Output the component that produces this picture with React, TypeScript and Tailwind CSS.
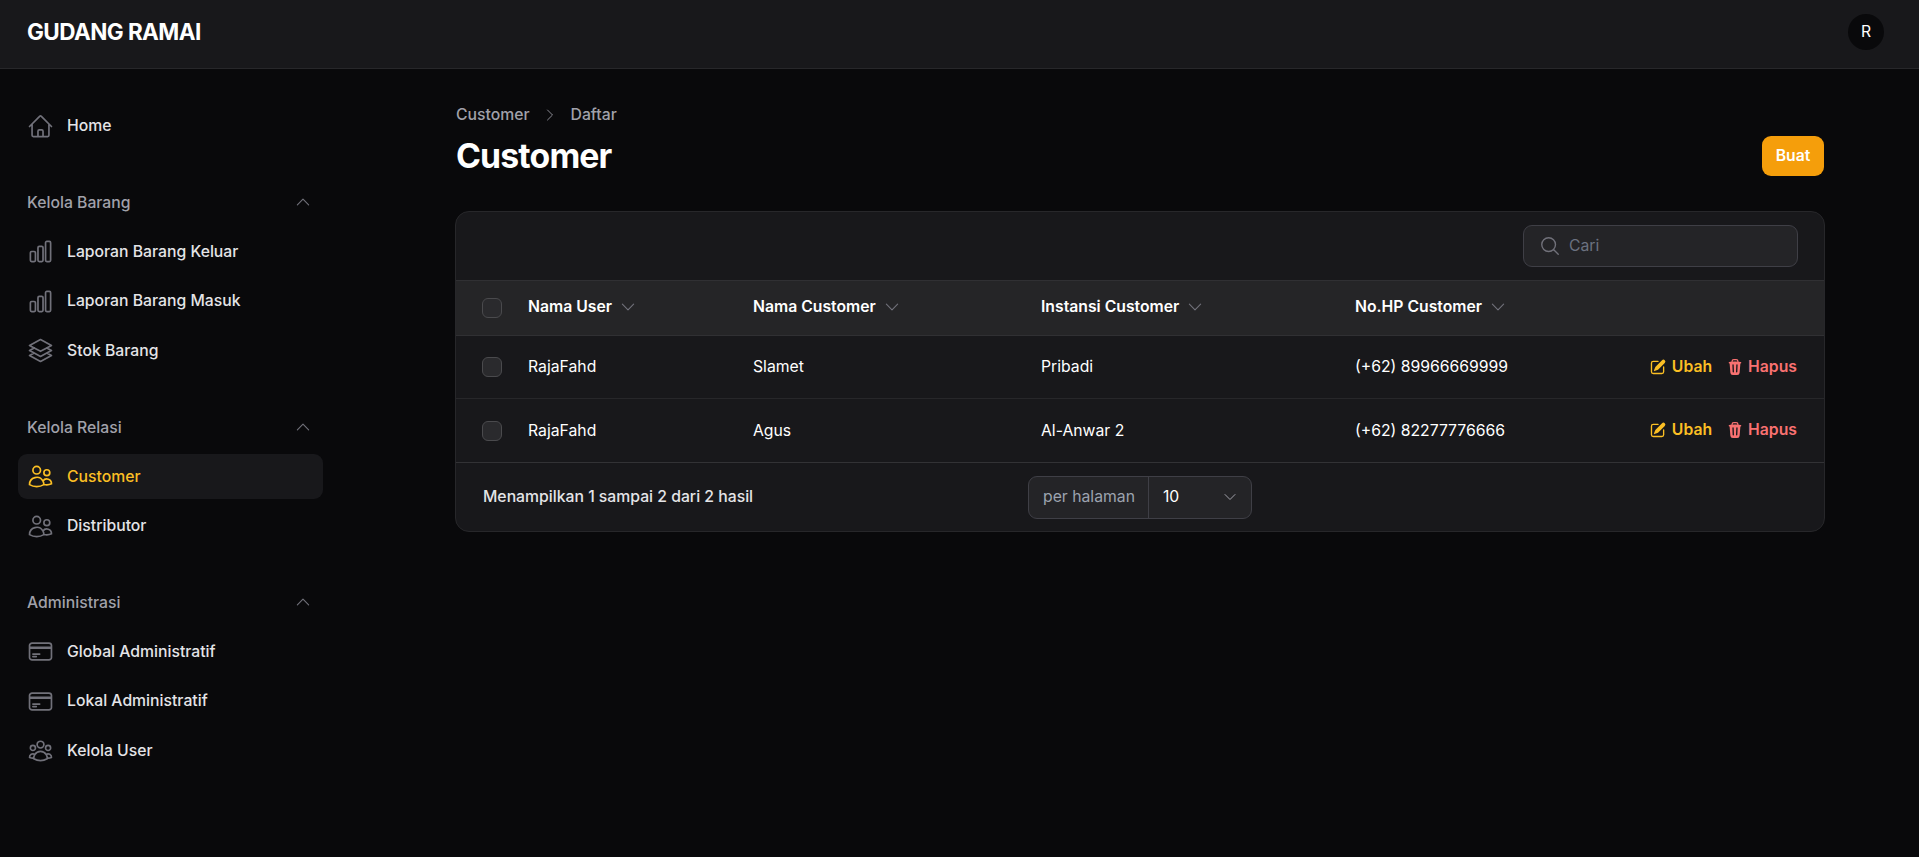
import type { ComponentType, ReactNode } from "react";
import {
  HiOutlineChartBar,
  HiOutlineChevronDown,
  HiOutlineChevronRight,
  HiOutlineChevronUp,
  HiOutlineCreditCard,
  HiOutlineHome,
  HiOutlineMagnifyingGlass,
  HiOutlineSquare3Stack3D,
  HiOutlineUserGroup,
  HiOutlineUsers,
} from "react-icons/hi2";
import { HiMiniPencilSquare, HiMiniTrash } from "react-icons/hi2";

type Icon = ComponentType<{ className?: string }>;

function NavItem({ icon: Ic, label, active }: { icon: Icon; label: string; active?: boolean }) {
  return (
    <a
      className={
        "flex h-[45px] items-center gap-[13px] rounded-[9px] px-[9px] text-[15.75px] font-medium " +
        (active ? "bg-[#18181b] text-[#fbbf24]" : "text-[#e4e4e7]")
      }
    >
      <Ic className={"h-[27px] w-[27px] shrink-0 " + (active ? "text-[#fbbf24]" : "text-[#71717a]")} />
      <span>{label}</span>
    </a>
  );
}

function NavGroup({ label, children }: { label: string; children: ReactNode }) {
  return (
    <div>
      <div className="mb-[12.5px] flex h-[27px] items-center justify-between px-[9px] text-[15.75px] font-medium text-[#a1a1aa]">
        <span>{label}</span>
        <HiOutlineChevronUp className="mb-[2px] mr-[2px] h-[18px] w-[18px] text-[#71717a]" />
      </div>
      <div className="flex flex-col gap-[4.5px]">{children}</div>
    </div>
  );
}

function Checkbox() {
  return <div className="h-[20px] w-[20px] rounded-[6px] border border-[#4a4a4d] bg-[#2a2a2d]" />;
}

function HeadCell({ label }: { label: string }) {
  return (
    <th className="p-0 pb-[3px] text-left text-[15.75px] font-semibold text-white">
      <span className="inline-flex items-center gap-[7px]">
        {label}
        <HiOutlineChevronDown className="h-[18px] w-[18px] text-[#71717a]" />
      </span>
    </th>
  );
}

const rows = [
  { user: "RajaFahd", name: "Slamet", org: "Pribadi", phone: "(+62) 89966669999", height: "h-[63px]" },
  { user: "RajaFahd", name: "Agus", org: "Al-Anwar 2", phone: "(+62) 82277776666", height: "h-[64px]" },
];

export default function App() {
  return (
    <div className="min-h-screen bg-[#09090b] font-['Inter',sans-serif] text-white">
      {/* Topbar */}
      <header className="flex h-[69px] items-center justify-between border-b border-[#27272a] bg-[#18181b] pb-[4px] pl-[27px] pr-[35px]">
        <div className="text-[22.5px] font-bold tracking-tight text-white">GUDANG RAMAI</div>
        <div className="flex h-[36px] w-[36px] items-center justify-center rounded-full bg-[#09090b] text-[15.75px] text-white">
          R
        </div>
      </header>

      <div className="flex">
        {/* Sidebar */}
        <aside className="flex w-[341px] shrink-0 flex-col gap-[41.25px] px-[18px] pt-[34.5px]">
          <NavItem icon={HiOutlineHome} label="Home" />
          <NavGroup label="Kelola Barang">
            <NavItem icon={HiOutlineChartBar} label="Laporan Barang Keluar" />
            <NavItem icon={HiOutlineChartBar} label="Laporan Barang Masuk" />
            <NavItem icon={HiOutlineSquare3Stack3D} label="Stok Barang" />
          </NavGroup>
          <NavGroup label="Kelola Relasi">
            <NavItem icon={HiOutlineUsers} label="Customer" active />
            <NavItem icon={HiOutlineUsers} label="Distributor" />
          </NavGroup>
          <NavGroup label="Administrasi">
            <NavItem icon={HiOutlineCreditCard} label="Global Administratif" />
            <NavItem icon={HiOutlineCreditCard} label="Lokal Administratif" />
            <NavItem icon={HiOutlineUserGroup} label="Kelola User" />
          </NavGroup>
        </aside>

        {/* Main */}
        <main className="flex-1 pl-[114px] pr-[94px] pt-[34px]">
          <nav className="flex items-center gap-[12.5px] pl-[1px] text-[15.75px] font-medium text-[#a1a1aa]">
            <span>Customer</span>
            <HiOutlineChevronRight className="h-[16px] w-[16px] text-[#8a8a93]" />
            <span>Daftar</span>
          </nav>

          <div className="mt-[9.5px] flex items-start justify-between pl-[1px] pr-[1px]">
            <h1 className="text-[33.75px] font-bold leading-[39px] tracking-tight text-white">Customer</h1>
            <button className="flex h-[40px] w-[62px] items-center justify-center rounded-[9px] bg-[#f59e0b] text-[15.75px] font-semibold text-white">
              Buat
            </button>
          </div>

          {/* Table card */}
          <div className="mt-[35px] overflow-hidden rounded-[14px] border border-[#27272a] bg-[#18181b]">
            <div className="flex h-[68px] items-center justify-end pr-[26px]">
              <div className="flex h-[42px] w-[275px] items-center gap-[8px] rounded-[9px] border border-[#3f3f46] bg-[#242427] px-[15px]">
                <HiOutlineMagnifyingGlass className="h-[22px] w-[22px] text-[#71717a]" />
                <span className="text-[15.75px] text-[#6b7280]">Cari</span>
              </div>
            </div>

            <table className="w-full table-fixed border-collapse">
              <colgroup>
                <col className="w-[72px]" />
                <col className="w-[225px]" />
                <col className="w-[288px]" />
                <col className="w-[314px]" />
                <col />
                <col className="w-[190px]" />
              </colgroup>
              <thead>
                <tr className="h-[55px] border-y border-[#303033] bg-[#252527]">
                  <th className="p-0 pl-[26px]">
                    <Checkbox />
                  </th>
                  <HeadCell label="Nama User" />
                  <HeadCell label="Nama Customer" />
                  <HeadCell label="Instansi Customer" />
                  <HeadCell label="No.HP Customer" />
                  <th />
                </tr>
              </thead>
              <tbody>
                {rows.map((row, i) => (
                  <tr
                    key={i}
                    className={
                      row.height +
                      " border-b text-[15.75px] text-white " +
                      (i === rows.length - 1 ? "border-[#323235]" : "border-[#27272a]")
                    }
                  >
                    <td className="p-0 pl-[26px]">
                      <Checkbox />
                    </td>
                    <td className="p-0">{row.user}</td>
                    <td className="p-0">{row.name}</td>
                    <td className="p-0">{row.org}</td>
                    <td className="p-0">{row.phone}</td>
                    <td className="p-0 pr-[27px]">
                      <div className="flex items-center justify-end gap-[14px] pb-[1px] text-[15.75px] font-semibold">
                        <span className="flex items-center gap-[5px] text-[#fbbf24]">
                          <HiMiniPencilSquare className="h-[18px] w-[18px]" />
                          Ubah
                        </span>
                        <span className="flex items-center gap-[4px] text-[#f87171]">
                          <HiMiniTrash className="h-[18px] w-[18px]" />
                          Hapus
                        </span>
                      </div>
                    </td>
                  </tr>
                ))}
              </tbody>
            </table>

            {/* Footer */}
            <div className="relative flex h-[68px] items-center pl-[27px] text-[15.75px] font-medium text-[#e4e4e7]">
              <span>Menampilkan 1 sampai 2 dari 2 hasil</span>
              <div className="absolute left-[572px] flex h-[43px] w-[224px] items-center rounded-[9px] border border-[#3f3f46] bg-[#242427] font-normal">
                <span className="flex h-full items-center border-r border-[#3f3f46] pl-[14px] pr-[13px] text-[#9ca3af]">
                  per halaman
                </span>
                <span className="flex flex-1 items-center justify-between pl-[14px] pr-[13px] text-white">
                  10
                  <HiOutlineChevronDown className="h-[16px] w-[16px] text-[#a1a1aa]" />
                </span>
              </div>
            </div>
          </div>
        </main>
      </div>
    </div>
  );
}
